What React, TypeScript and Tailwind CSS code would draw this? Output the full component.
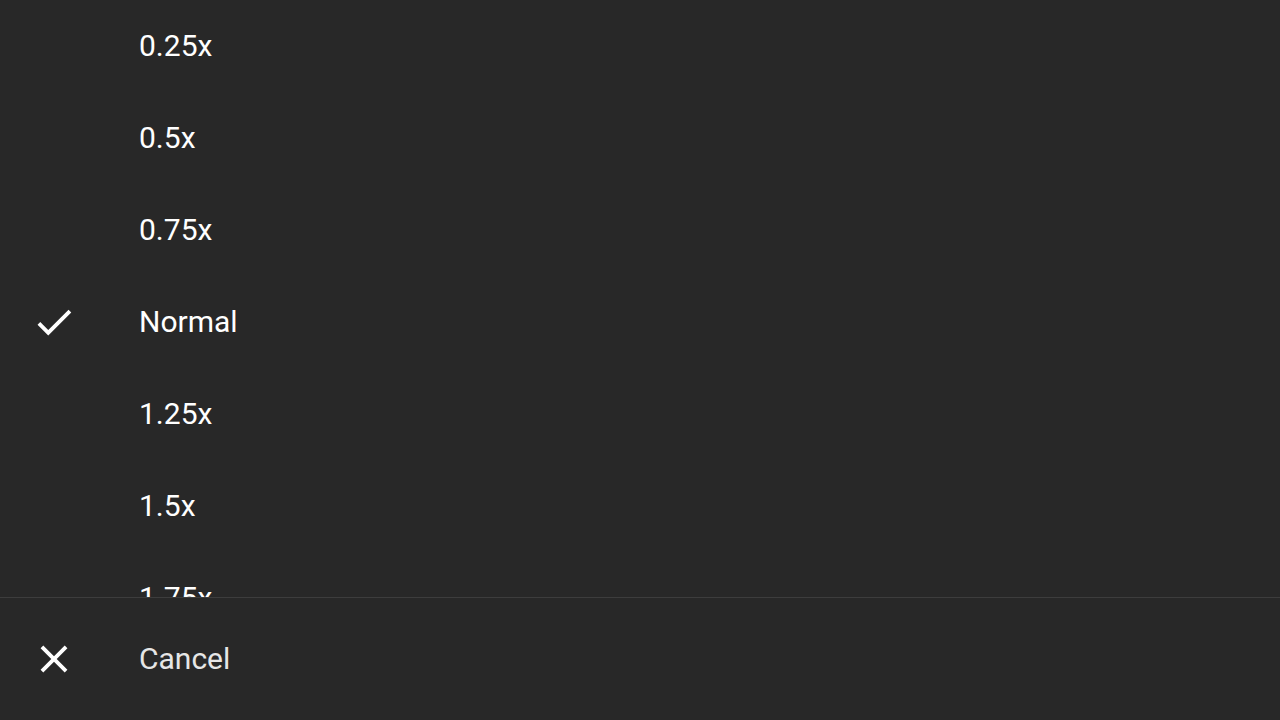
import React from "react";

const speeds = ["0.25x", "0.5x", "0.75x", "Normal", "1.25x", "1.5x", "1.75x"];

function CheckIcon() {
  return (
    <svg width="46" height="46" viewBox="0 0 24 24" fill="#ffffff">
      <path d="M9 16.17L4.83 12l-1.42 1.41L9 19 21 7l-1.41-1.41z" />
    </svg>
  );
}

function CloseIcon() {
  return (
    <svg width="46" height="46" viewBox="0 0 24 24" fill="#ffffff">
      <path d="M19 6.41L17.59 5 12 10.59 6.41 5 5 6.41 10.59 12 5 17.59 6.41 19 12 13.41 17.59 19 19 17.59 13.41 12z" />
    </svg>
  );
}

export default function App() {
  return (
    <div
      className="w-[1280px] h-[720px] bg-[#282828] flex flex-col overflow-hidden"
      style={{ fontFamily: "Roboto, 'Noto Sans', sans-serif" }}
    >
      <div className="h-[598px] shrink-0 overflow-hidden border-b border-[#3d3d3d]">
        {speeds.map((s) => (
          <div key={s} className="h-[92px] flex items-center">
            <div className="ml-[31px] w-[46px] h-[46px] flex items-center justify-center">
              {s === "Normal" ? <CheckIcon /> : null}
            </div>
            <span className="ml-[62px] text-[30px] leading-none text-white">{s}</span>
          </div>
        ))}
      </div>
      <div className="flex-1 flex items-center">
        <div className="ml-[31px] w-[46px] h-[46px] flex items-center justify-center">
          <CloseIcon />
        </div>
        <span className="ml-[62px] text-[30px] leading-none text-[#e6e6e6]">Cancel</span>
      </div>
    </div>
  );
}
